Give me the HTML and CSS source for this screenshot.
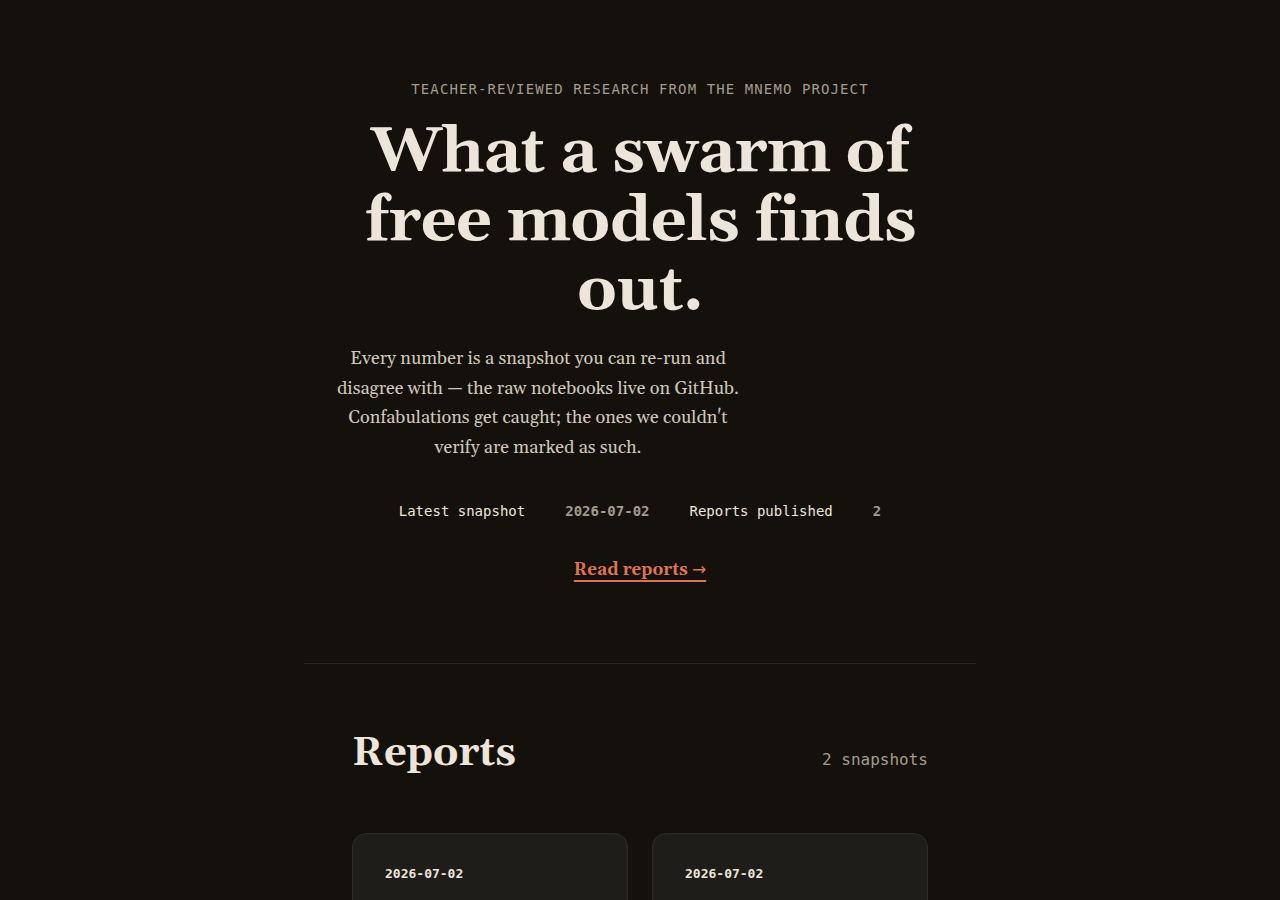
FILE: index.html
```html
<!DOCTYPE html>
<html lang="en">
<head>
<meta charset="utf-8">
<title>Mnemo — Research reports</title>
<link rel="stylesheet" href="styles.css">
</head>
<body>
<main class="page">
  <section class="hero">
    <p class="eyebrow">Teacher-reviewed research from the Mnemo project</p>
    <h1 class="headline">What a swarm of free models finds out.</h1>
    <p class="lede">Every number is a snapshot you can re-run and disagree with — the raw notebooks live on GitHub. Confabulations get caught; the ones we couldn't verify are marked as such.</p>
    <dl class="stats">
      <dt>Latest snapshot</dt>
      <dd>2026-07-02</dd>
      <dt>Reports published</dt>
      <dd>2</dd>
    </dl>
    <a class="cta" href="#reports">Read reports <span class="arrow">→</span></a>
  </section>

  <hr class="rule">

  <section class="reports" id="reports">
    <header class="reports-head">
      <h2>Reports</h2>
      <span class="count">2 snapshots</span>
    </header>
    <div class="cards">
      <article class="card">
        <time class="card-date">2026-07-02</time>
      </article>
      <article class="card">
        <time class="card-date">2026-07-02</time>
      </article>
    </div>
  </section>
</main>
</body>
</html>
```

FILE: styles.css
```css
:root {
  --bg: #14110d;
  --ink: #ede5d9;
  --muted: #a39b8f;
  --body: #cfc7ba;
  --accent: #df7452;
  --line: #2a2722;
  --card: #1e1d19;
  --card-line: #2d2b26;
  --serif: Georgia, Gelasio, "Noto Serif", "Liberation Serif", serif;
  --mono: "DejaVu Sans Mono", "Liberation Mono", monospace;
}

* { box-sizing: border-box; }

html, body {
  margin: 0;
  background: var(--bg);
  color: var(--ink);
  font-family: var(--serif);
}

.page {
  max-width: 672px;
  margin: 0 auto;
}

/* hero */
.hero {
  padding: 80px 32px 0;
  text-align: center;
}

.eyebrow {
  margin: 0;
  font-family: var(--mono);
  font-size: 14px;
  letter-spacing: 1.1px;
  text-transform: uppercase;
  color: var(--muted);
  line-height: 18px;
}

.headline {
  margin: 21px 0 0;
  font-size: 63px;
  line-height: 69px;
  font-weight: 700;
  letter-spacing: -0.01em;
  color: var(--ink);
}

.lede {
  width: 404px;
  margin: 18px 0 0;
  font-size: 18px;
  line-height: 29.7px;
  color: var(--body);
  text-align: center;
}

.stats {
  display: flex;
  justify-content: center;
  gap: 40px;
  margin: 38px 0 0;
  font-family: var(--mono);
  font-size: 14px;
  line-height: 20px;
}

.stats dt { color: var(--ink); }

.stats dd {
  margin: 0;
  color: var(--muted);
  font-weight: 700;
}

.cta {
  display: inline-block;
  margin-top: 38px;
  font-size: 17px;
  font-weight: 700;
  color: var(--accent);
  text-decoration: underline;
  text-decoration-thickness: 2px;
  text-underline-offset: 5px;
}

.cta .arrow {
  font-family: "DejaVu Sans", sans-serif;
  font-weight: 400;
  font-size: 17px;
}

.rule {
  margin: 82px 0 0;
  border: 0;
  border-top: 1px solid var(--line);
}

/* reports */
.reports {
  padding: 64px 48px 0;
}

.reports-head {
  display: flex;
  justify-content: space-between;
  align-items: baseline;
}

.reports-head h2 {
  margin: 0;
  font-size: 40px;
  line-height: 52px;
  font-weight: 700;
  color: var(--ink);
}

.count {
  font-family: var(--mono);
  font-size: 16px;
  color: var(--muted);
}

.cards {
  display: grid;
  grid-template-columns: 1fr 1fr;
  gap: 24px;
  margin-top: 53px;
}

.card {
  min-height: 200px;
  padding: 32px;
  background: var(--card);
  border: 1px solid var(--card-line);
  border-radius: 14px;
}

.card-date {
  display: block;
  font-family: var(--mono);
  font-size: 13px;
  font-weight: 700;
  color: var(--ink);
}
```
